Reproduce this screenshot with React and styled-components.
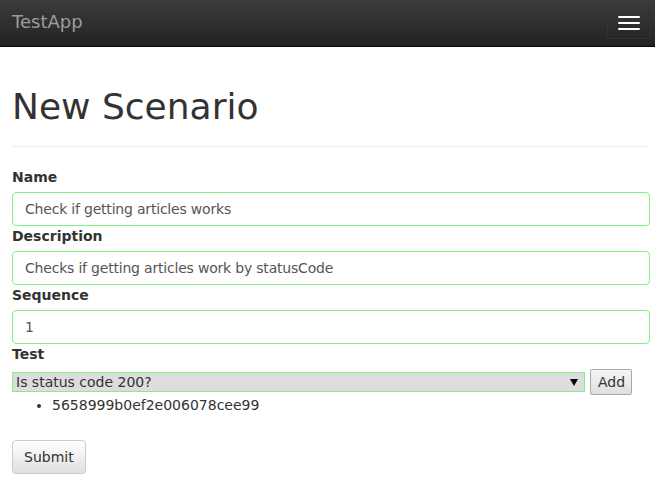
import React from "react";
import styled, { createGlobalStyle } from "styled-components";

const Global = createGlobalStyle`
  html, body { margin: 0; padding: 0; background: #fff; }
  body {
    font-family: "DejaVu Sans", Verdana, sans-serif;
    font-size: 14px;
    line-height: 20px;
    color: #333;
  }
  * { box-sizing: border-box; }
`;

const Navbar = styled.nav`
  height: 47px;
  background: linear-gradient(to bottom, #3c3c3c 0%, #222 100%);
  border-bottom: 1px solid #080808;
  display: flex;
  align-items: flex-start;
  justify-content: space-between;
  padding: 0 4px 0 12px;
`;

const Brand = styled.a`
  font-size: 18px;
  line-height: 20px;
  padding-top: 12px;
  color: #9d9d9d;
  text-decoration: none;
`;

const Toggle = styled.button`
  margin-top: 7px;
  width: 44px;
  height: 32px;
  border: 1px solid #333;
  border-radius: 4px;
  background: transparent;
  display: flex;
  flex-direction: column;
  align-items: center;
  justify-content: center;
  gap: 4px;
  padding: 0;
`;

const Bar = styled.span`
  display: block;
  width: 22px;
  height: 2px;
  border-radius: 1px;
  background: #fff;
`;

const Container = styled.main`
  padding: 0 5px 0 12px;
`;

const PageHeader = styled.div`
  margin: 40px 0 20px;
  padding-bottom: 9px;
  border-bottom: 1px solid #eee;
`;

const H1 = styled.h1`
  margin: 0 0 10px;
  font-size: 36px;
  font-weight: 500;
  line-height: 1.1;
  color: #333;
`;

const Label = styled.label`
  display: block;
  font-weight: bold;
  margin-bottom: 5px;
`;

const Input = styled.input`
  display: block;
  width: 100%;
  height: 34px;
  padding: 6px 12px;
  font-family: inherit;
  font-size: 14px;
  letter-spacing: -0.2px;
  line-height: 20px;
  color: #555;
  background: #fff;
  border: 1px solid #7ff27f;
  border-radius: 4px;
  outline: none;
`;

const TestRow = styled.div`
  display: flex;
  align-items: center;
  gap: 5px;
  height: 26px;
`;

const SelectWrap = styled.div`
  position: relative;
  width: 573px;
  height: 20px;
`;

const Select = styled.select`
  appearance: none;
  -webkit-appearance: none;
  width: 100%;
  height: 20px;
  margin: 0;
  padding: 0 20px 0 3px;
  font-family: inherit;
  font-size: 14px;
  line-height: 18px;
  color: #333;
  background: #dddddd;
  border: 1px solid #7ff27f;
  border-radius: 0;
  outline: none;
`;

const Arrow = styled.svg`
  position: absolute;
  right: 7px;
  top: 7px;
  pointer-events: none;
`;

const SmallButton = styled.button`
  height: 26px;
  padding: 0 6px 0 7px;
  font-family: inherit;
  font-size: 14px;
  color: #333;
  background: linear-gradient(to bottom, #f6f6f6, #dedede);
  border: 1px solid #a9a9a9;
  border-radius: 2px;
`;

const List = styled.ul`
  margin: 0 0 10px;
  padding-left: 40px;
`;

const Item = styled.li`
  line-height: 20px;
`;

const SubmitButton = styled.button`
  margin-top: 15px;
  height: 34px;
  padding: 6px 11px;
  font-family: inherit;
  font-size: 14px;
  line-height: 20px;
  color: #333;
  background: linear-gradient(to bottom, #fff 0%, #e0e0e0 100%);
  border: 1px solid #ccc;
  border-radius: 4px;
  box-shadow: inset 0 1px 0 rgba(255,255,255,.15), 0 1px 1px rgba(0,0,0,.075);
`;

export default function App() {
  return (
    <>
      <Global />
      <Navbar>
        <Brand href="#">TestApp</Brand>
        <Toggle aria-label="menu">
          <Bar />
          <Bar />
          <Bar />
        </Toggle>
      </Navbar>
      <Container>
        <PageHeader>
          <H1>New Scenario</H1>
        </PageHeader>
        <form onSubmit={(e) => e.preventDefault()}>
          <Label>Name</Label>
          <Input defaultValue="Check if getting articles works" />
          <Label>Description</Label>
          <Input defaultValue="Checks if getting articles work by statusCode" />
          <Label>Sequence</Label>
          <Input defaultValue="1" />
          <Label>Test</Label>
          <TestRow>
            <SelectWrap>
              <Select defaultValue="a">
                <option value="a">Is status code 200?</option>
              </Select>
              <Arrow width="8" height="7" viewBox="0 0 8 7">
                <path d="M0 0 H8 L4 7 Z" fill="#000" />
              </Arrow>
            </SelectWrap>
            <SmallButton type="button">Add</SmallButton>
          </TestRow>
          <List>
            <Item>5658999b0ef2e006078cee99</Item>
          </List>
          <SubmitButton type="submit">Submit</SubmitButton>
        </form>
      </Container>
    </>
  );
}
